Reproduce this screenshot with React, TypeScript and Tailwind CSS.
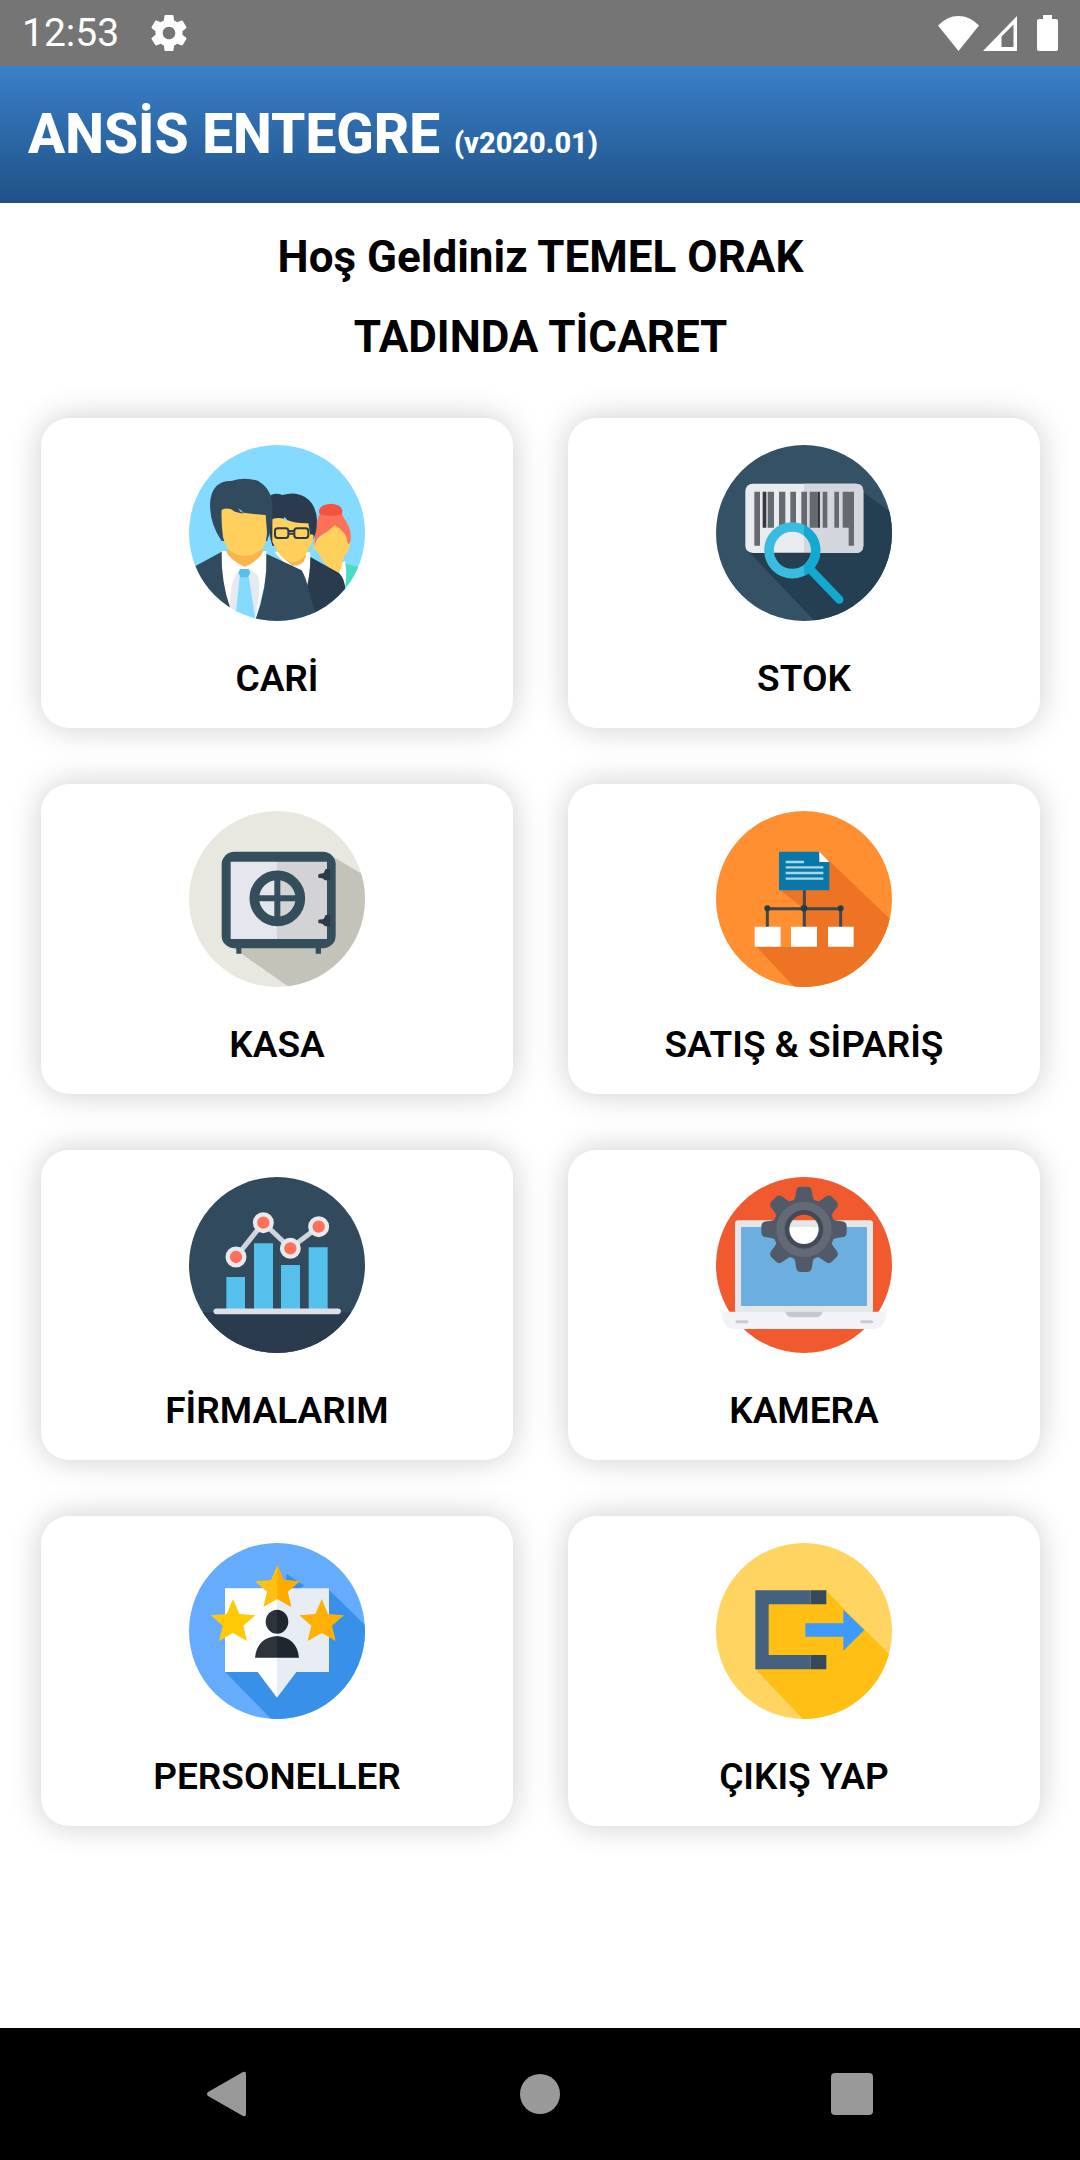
import type { ReactNode } from 'react';

type BadgeProps = {
  id: string;
  background: string;
  children: ReactNode;
};

// Round 528x528 badge, everything inside is clipped to the circle
function Badge({ id, background, children }: BadgeProps) {
  return (
    <svg viewBox="0 0 528 528" className="size-44" aria-hidden="true">
      <clipPath id={id}>
        <circle cx="264" cy="264" r="264" />
      </clipPath>
      <g clipPath={`url(#${id})`}>
        <rect width="528" height="528" fill={background} />
        {children}
      </g>
    </svg>
  );
}

function CustomersIcon() {
  return (
    <Badge id="customers" background="#84dbff">
      {/* Woman */}
      <path d="M458 350 L475 358 L510 366 L528 380 V450 H465 Z" fill="#4cdbc4" />
      <path d="M440 362 L468 348 L472 380 L468 440 L445 400 Z" fill="#fff" />
      <path d="M380 285 Q370 300 373 314 Q384 314 389 325 Q400 352 418 366 L448 390 L459 362 Q459 346 470 326 Q482 318 482 296 L474 280 Q468 255 438 235 Q410 258 384 285 Z" fill="#ffd05b" />
      <path d="M384 240 Q384 216 394 206 H458 Q462 216 472 230 Q490 260 484 290 L478 298 Q474 285 472 275 Q460 254 438 241 Q416 262 394 272 Q382 280 376 304 Q376 280 384 240 Z" fill="#ff7058" />
      <path d="M392 208 Q382 180 426 176 Q468 180 458 208 Q426 218 392 208 Z" fill="#f1543f" />
      {/* Man with glasses */}
      <path d="M255 320 L364 322 L364 440 L330 400 Z" fill="#fff" />
      <path d="M284 340 L352 330 L344 350 Q330 364 310 362 Z" fill="#f9b54c" />
      <path d="M364 336 L450 384 Q468 400 470 440 L440 490 L378 512 L350 440 Q364 390 364 336 Z" fill="#2b3b4e" />
      <path d="M246 150 Q262 142 280 150 Q318 138 348 156 Q382 178 384 226 Q384 270 368 292 L356 302 H250 Q236 260 238 200 Z" fill="#2b3b4e" />
      <path d="M250 222 Q274 214 296 226 Q318 236 358 235 L364 270 Q370 264 374 272 Q374 292 362 302 Q350 342 318 352 Q282 350 266 320 L250 290 Z" fill="#ffd05b" />
      <path d="M286 216 Q294 222 298 230 L284 224 Z" fill="#84dbff" />
      <g fill="none" stroke="#2b3b4e" strokeWidth="6">
        <rect x="258" y="250" width="40" height="29" rx="8" />
        <rect x="316" y="250" width="42" height="29" rx="8" />
        <path d="M298 258 H316 M298 266 H316" />
      </g>
      {/* Man in front */}
      <path d="M98 318 L232 318 L236 380 L200 528 H130 L94 400 Z" fill="#fff" />
      <path d="M150 380 Q122 400 124 490 L150 528 H196 Q222 420 204 388 L184 374 Z" fill="#e6e9ee" />
      <path d="M110 316 L224 316 Q214 344 167 366 Q120 344 110 316 Z" fill="#f9b54c" />
      <path d="M153 388 L178 388 L200 528 H138 Z" fill="#84dbff" />
      <path d="M153 372 H179 L184 384 L176 397 H155 L148 384 Z" fill="#54c0eb" />
      <path d="M10 368 L98 320 Q96 410 124 490 L110 500 L50 460 Z" fill="#324a5e" />
      <path d="M232 326 L338 376 Q352 400 360 440 L382 510 L320 528 H198 Q236 430 232 326 Z" fill="#324a5e" />
      <path d="M98 288 Q58 230 64 164 Q74 106 126 108 Q170 94 208 108 Q244 130 248 166 Q258 230 234 288 Z" fill="#324a5e" />
      <path d="M98 192 Q120 184 140 200 Q180 206 230 210 L234 262 Q232 312 204 322 Q166 344 130 322 Q110 310 102 276 Q96 230 98 192 Z" fill="#ffd05b" />
      <path d="M94 196 Q120 184 138 200 L162 206 L148 192 Q186 208 236 208 L234 180 L100 168 Z" fill="#324a5e" />
      <path d="M148 190 L162 200 L154 200 Z" fill="#84dbff" />
    </Badge>
  );
}

function StockIcon() {
  return (
    <Badge id="stock" background="#355166">
      <path d="M440 140 L528 204 V528 H296 L100 322 Z" fill="#243f51" />
      <rect x="88" y="116" width="354" height="208" rx="22" fill="#e9ebef" />
      <path d="M264 116 H420 Q442 116 442 138 V302 Q442 324 420 324 H264 Z" fill="#d4d6dd" />
      <path d="M115 140 H132 V302 H115 Z" fill="#656a70" />
      <g fill="#656a70">
        <path d="M189 140 H208 V248 H189 Z M223 140 H240 V248 H223 Z M256 140 H273 V248 H256 Z M281 140 H306 V248 H281 Z M320 140 H334 V248 H320 Z M355 140 H369 V248 H355 Z M380 140 H398 V248 H380 Z M398 140 H414 V302 H398 Z" />
      </g>
      <path d="M140 140 H151 V248 H140 Z M306 140 H312 V248 H306 Z" fill="#34383c" />
      <path d="M155 140 H174 V248 H155 Z" fill="#656a70" />
      <path d="M172 323 H286 A57 57 0 0 1 172 323 Z" fill="#243f51" />
      <circle cx="229" cy="316" r="70" fill="none" stroke="#38bde0" strokeWidth="29" />
      <path d="M264 239 A85 85 0 0 1 264 393 L264 361 A57 57 0 0 0 264 271 Z" fill="#12a8d0" />
      <path d="M282 372 L370 464" fill="none" stroke="#12a8d0" strokeWidth="25" strokeLinecap="round" />
    </Badge>
  );
}

function SafeIcon() {
  return (
    <Badge id="safe" background="#e8e8e1">
      <path d="M430 136 L528 194 V528 H300 L120 402 Z" fill="#c3c3b9" />
      <path d="M142 400 H157 V428 H142 Z M380 400 H396 V428 H380 Z" fill="#344e5c" />
      <rect x="98" y="122" width="342" height="290" rx="38" fill="#344e5c" />
      <path d="M125 152 H264 V384 H125 Z" fill="#e5e5ed" />
      <path d="M264 152 H414 V384 H264 Z" fill="#d3d3d5" />
      <path d="M388 190 L404 186 L410 174 H424 V208 H408 L400 202 L388 200 Z M388 326 L404 324 L410 312 H424 V346 H408 L400 338 L388 336 Z" fill="#2b3b49" />
      <circle cx="265" cy="262" r="69" fill="none" stroke="#344e5c" strokeWidth="29" />
      <path d="M265 202 V322 M205 262 H325" stroke="#344e5c" strokeWidth="18" />
    </Badge>
  );
}

function OrdersIcon() {
  return (
    <Badge id="orders" background="#ff8f30">
      <path d="M335 145 L528 330 V528 H235 L122 408 H260 V290 L192 236 Z" fill="#ed7424" />
      <path d="M189 122 H308 L340 154 V238 H189 Z" fill="#0878ab" />
      <path d="M310 122 V153 H340 Z" fill="#fff" />
      <path d="M209 153 H264 M209 169 H322 M209 186 H322 M209 203 H322" stroke="#a7d8e8" strokeWidth="7" />
      <path d="M265 238 V350 M154 350 V293 H374 V350" fill="none" stroke="#40484d" strokeWidth="9" />
      <g fill="#263b43">
        <circle cx="154" cy="292" r="9" />
        <circle cx="264" cy="292" r="10" />
        <circle cx="374" cy="292" r="9" />
      </g>
      <path d="M116 347 H194 V407 H116 Z M225 347 H303 V407 H225 Z M336 347 H413 V407 H336 Z" fill="#fff" />
    </Badge>
  );
}

function CompaniesIcon() {
  return (
    <Badge id="companies" background="#324a5e">
      <path d="M0 406 H528 V528 H0 Z" fill="#2b3b4e" />
      <path d="M112 300 H168 V396 H112 Z M195 199 H252 V396 H195 Z M276 264 H333 V396 H276 Z M359 211 H416 V396 H359 Z" fill="#54c0eb" />
      <path d="M82 403 H447" stroke="#dce0e8" strokeWidth="17" strokeLinecap="round" />
      <path d="M141 240 L223 137 L304 214 L389 149" fill="none" stroke="#cfd4dd" strokeWidth="15" />
      <g fill="#ff7058" stroke="#e6e9ee" strokeWidth="13">
        <circle cx="141" cy="240" r="25" />
        <circle cx="223" cy="137" r="25" />
        <circle cx="304" cy="214" r="25" />
        <circle cx="389" cy="149" r="25" />
      </g>
    </Badge>
  );
}

function CameraIcon() {
  return (
    <svg viewBox="0 0 528 528" className="size-44" aria-hidden="true">
      <circle cx="264" cy="264" r="264" fill="#f1592f" />
      <rect x="57" y="130" width="414" height="278" rx="10" fill="#e4e6e7" />
      <rect x="75" y="150" width="378" height="237" fill="#6daee0" />
      <path d="M18 404 H510 Q510 456 470 456 H58 Q18 456 18 404 Z" fill="#f2f3f7" />
      <path d="M208 404 H320 Q316 421 298 421 H230 Q212 421 208 404 Z" fill="#c5c7cb" />
      <path d="M63 434 H93 M437 434 H467" stroke="#c9cbd0" strokeWidth="9" strokeLinecap="round" />
      <path d="M212 150 H316 V157 A52 52 0 0 1 212 157 Z" fill="#fff" />
      <g fill="none" stroke="#525a69" strokeWidth="46">
        {[0, 45, 90, 135, 180, 225, 270, 315].map((angle) => (
          <path
            key={angle}
            d="M230 76 Q238 68 240 44 Q242 29 254 29 H274 Q286 29 288 44 Q290 68 298 76 Z"
            transform={`rotate(${angle} 264 157)`}
            fill="#525a69"
            stroke="none"
          />
        ))}
      </g>
      <circle cx="264" cy="157" r="73" fill="none" stroke="#525a69" strokeWidth="40" />
      <circle cx="264" cy="157" r="68" fill="none" stroke="#646a75" strokeWidth="30" />
      <circle cx="264" cy="157" r="51" fill="none" stroke="#434a57" strokeWidth="14" />
    </svg>
  );
}

const STAR = 'M0 -68 L19 -23 L67 -19 L31 12 L42 58 L0 34 L-42 58 L-31 12 L-67 -19 L-19 -23 Z';

function StaffIcon() {
  return (
    <Badge id="staff" background="#65adfc">
      <path d="M293 92 L346 128 L330 138 H290 Z" fill="#3890e8" />
      <path d="M420 140 L528 246 V528 H246 L108 386 H420 Z" fill="#3890e8" />
      <path d="M108 136 H264 V464 L206 387 H108 Z" fill="#fff" />
      <path d="M264 136 H420 V387 H322 L264 464 Z" fill="#e8ecf5" />
      <path d="M264 200 A34 36 0 0 0 264 272 Z M264 279 Q204 284 198 344 H264 Z" fill="#2c333b" />
      <path d="M264 200 A34 36 0 0 1 264 272 Z M264 279 Q324 284 330 344 H264 Z" fill="#1f262e" />
      <path d={STAR} transform="translate(132 236)" fill="#ffca05" />
      <path d={STAR} transform="translate(398 236)" fill="#ffb004" />
      <path d={STAR} transform="translate(265 134)" fill="#ffc012" />
      <path d="M265 66 L284 111 L332 115 L296 146 L307 192 L265 168 Z" fill="#ffab02" />
    </Badge>
  );
}

function LogoutIcon() {
  return (
    <Badge id="logout" background="#ffd461">
      <path d="M331 144 L528 342 V528 H260 L120 380 V144 Z" fill="#ffbf15" />
      <path d="M118 142 H284 V184 H158 V336 H284 V379 H118 Z" fill="#456180" />
      <path d="M284 142 H331 V184 H284 Z M284 336 H331 V379 H284 Z" fill="#34495e" />
      <path d="M268 241 H382 V200 L445 261 L382 323 V281 H268 Z" fill="#3d9bff" />
    </Badge>
  );
}

const menuItems = [
  { label: 'CARİ', Icon: CustomersIcon },
  { label: 'STOK', Icon: StockIcon },
  { label: 'KASA', Icon: SafeIcon },
  { label: 'SATIŞ & SİPARİŞ', Icon: OrdersIcon },
  { label: 'FİRMALARIM', Icon: CompaniesIcon },
  { label: 'KAMERA', Icon: CameraIcon },
  { label: 'PERSONELLER', Icon: StaffIcon },
  { label: 'ÇIKIŞ YAP', Icon: LogoutIcon },
];

function StatusBar() {
  return (
    <div className="flex h-[66px] items-center justify-between bg-[#757575] px-[22px] text-white">
      <div className="flex items-center gap-8">
        <span className="text-[39px] leading-[48px]">12:53</span>
        <svg viewBox="2 2 20 20" className="size-9" fill="currentColor" aria-hidden="true">
          <path d="M19.43 12.98c.04-.32.07-.64.07-.98s-.03-.66-.07-.98l2.11-1.65c.19-.15.24-.42.12-.64l-2-3.46c-.12-.22-.39-.3-.61-.22l-2.49 1c-.52-.4-1.08-.73-1.69-.98l-.38-2.65C14.46 2.18 14.25 2 14 2h-4c-.25 0-.46.18-.49.42l-.38 2.65c-.61.25-1.17.59-1.69.98l-2.49-1c-.23-.09-.49 0-.61.22l-2 3.46c-.13.22-.07.49.12.64l2.11 1.65c-.04.32-.07.65-.07.98s.03.66.07.98l-2.11 1.65c-.19.15-.24.42-.12.64l2 3.46c.12.22.39.3.61.22l2.49-1c.52.4 1.08.73 1.69.98l.38 2.65c.03.24.24.42.49.42h4c.25 0 .46-.18.49-.42l.38-2.65c.61-.25 1.17-.59 1.69-.98l2.49 1c.23.09.49 0 .61-.22l2-3.46c.12-.22.07-.49-.12-.64l-2.11-1.65zM12 15.5c-1.93 0-3.5-1.57-3.5-3.5s1.57-3.5 3.5-3.5 3.5 1.57 3.5 3.5-1.57 3.5-3.5 3.5z" />
        </svg>
      </div>
      <div className="flex items-center">
        <svg viewBox="0 0 41 35" className="mr-1 h-[35px] w-[41px]" fill="currentColor" aria-hidden="true">
          <path d="M20.500 35 L0 9.500 Q9 0 20.500 0 Q32 0 41 9.500 Z" />
        </svg>
        <svg viewBox="0 0 34 35" className="mr-5 h-[35px] w-[34px]" fill="currentColor" aria-hidden="true">
          <path fillRule="evenodd" d="M34 0 V35 H0 Z M30.500 8.500 L18.500 20.500 V31 H30.500 Z" />
        </svg>
        <svg viewBox="0 0 21 36" className="h-9 w-[21px]" fill="currentColor" aria-hidden="true">
          <path d="M6 0 H15 V4 H19 Q21 4 21 6 V34 Q21 36 19 36 H2 Q0 36 0 34 V6 Q0 4 2 4 H6 Z" />
        </svg>
      </div>
    </div>
  );
}

function NavigationBar() {
  return (
    <nav className="grid h-[132px] grid-cols-3 bg-black px-[72px] text-[#999]">
      <button type="button" aria-label="Geri" className="flex items-center justify-center">
        <svg viewBox="0 0 44 46" className="h-[46px] w-11" fill="currentColor" aria-hidden="true">
          <path d="M2 21 L37 1 Q40 0 40 3 V43 Q40 46 37 45 L2 25 Q0 23 2 21 Z" />
        </svg>
      </button>
      <button type="button" aria-label="Ana ekran" className="flex items-center justify-center">
        <span className="size-10 rounded-full bg-current" />
      </button>
      <button type="button" aria-label="Son uygulamalar" className="flex items-center justify-center">
        <span className="size-[42px] rounded-sm bg-current" />
      </button>
    </nav>
  );
}

export default function App() {
  return (
    <div className="flex min-h-screen flex-col bg-white font-[Roboto,sans-serif] text-black">
      <StatusBar />
      <header className="bg-linear-to-b from-[#3b80c9] to-[#1f5287] px-7 py-8">
        <h1 className="text-[55px] leading-[73px] font-extrabold text-white">
          ANSİS ENTEGRE <span className="text-[29px] leading-none">(v2020.01)</span>
        </h1>
      </header>

      <main className="flex flex-1 flex-col pt-[14px] pr-10 pl-[41px]">
        <div className="text-center text-[44px] leading-[80px] font-bold">
          <p>Hoş Geldiniz TEMEL ORAK</p>
          <p>TADINDA TİCARET</p>
        </div>

        <div className="mt-[41px] grid grid-cols-2 gap-x-[55px] gap-y-14">
          {menuItems.map(({ label, Icon }) => (
            <button
              key={label}
              type="button"
              className="flex flex-col items-center rounded-[28px] bg-white pt-[27px] pb-6 shadow-[0_0_32px_rgba(0,0,0,0.2)]"
            >
              <Icon />
              <span className="mt-8 text-[37px] leading-[51px] font-semibold">{label}</span>
            </button>
          ))}
        </div>
      </main>

      <NavigationBar />
    </div>
  );
}
